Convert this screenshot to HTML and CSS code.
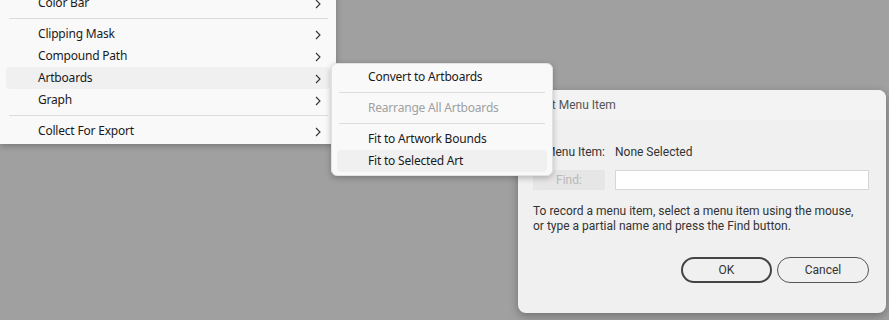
FILE: index.html
```html
<!DOCTYPE html>
<html lang="en">
<head>
  <meta charset="UTF-8">
  <title>Insert Menu Item</title>
  <link rel="stylesheet" href="styles.css">
</head>
<body>

<div class="dialog">
  <div class="dialog-title">Insert Menu Item</div>
  <div class="dialog-body">
    <div class="row">
      <span class="row-label">Menu Item:</span>
      <span class="row-value">None Selected</span>
    </div>
    <div class="row">
      <button class="find-btn" disabled>Find:</button>
      <input class="find-input" type="text">
    </div>
    <p class="hint">To record a menu item, select a menu item using the mouse,<br>or type a partial name and press the Find button.</p>
    <div class="actions">
      <button class="btn btn-default">OK</button>
      <button class="btn">Cancel</button>
    </div>
  </div>
</div>

<ul class="menu main-menu">
  <li class="item">Color Bar<svg class="chev" viewBox="0 0 6 10"><polyline points="1,1 5,5 1,9"/></svg></li>
  <li class="sep"></li>
  <li class="item">Clipping Mask<svg class="chev" viewBox="0 0 6 10"><polyline points="1,1 5,5 1,9"/></svg></li>
  <li class="item">Compound Path<svg class="chev" viewBox="0 0 6 10"><polyline points="1,1 5,5 1,9"/></svg></li>
  <li class="item hover">Artboards<svg class="chev" viewBox="0 0 6 10"><polyline points="1,1 5,5 1,9"/></svg></li>
  <li class="item">Graph<svg class="chev" viewBox="0 0 6 10"><polyline points="1,1 5,5 1,9"/></svg></li>
  <li class="sep"></li>
  <li class="item">Collect For Export<svg class="chev" viewBox="0 0 6 10"><polyline points="1,1 5,5 1,9"/></svg></li>
</ul>

<ul class="menu sub-menu">
  <li class="item">Convert to Artboards</li>
  <li class="sep"></li>
  <li class="item disabled">Rearrange All Artboards</li>
  <li class="sep"></li>
  <li class="item">Fit to Artwork Bounds</li>
  <li class="item hover">Fit to Selected Art</li>
</ul>

</body>
</html>
```

FILE: styles.css
```css
body {
  margin: 0;
  width: 889px;
  height: 320px;
  background-color: #a0a0a0;
  overflow: hidden;
  position: relative;
  font-family: "Noto Sans", sans-serif;
}

/* menus */
.menu {
  list-style: none;
  margin: 0;
  position: absolute;
  background-color: #f9f9f9;
  box-shadow: 0 2px 6px rgba(0,0,0,0.25);
  font-size: 12px;
  letter-spacing: -0.2px;
  color: #1a1a1a;
}
.main-menu {
  left: 0;
  top: -12px;
  width: 336px;
  padding: 4px 0 2px;
  border-radius: 0 0 6px 0;
}
.sub-menu {
  left: 331px;
  top: 63px;
  width: 222px;
  padding: 2px 0 3px;
  border-radius: 6px;
  border: 1px solid #e2e2e2;
  box-sizing: border-box;
}
.item {
  height: 22px;
  line-height: 22px;
  margin: 0 6px;
  padding-left: 32px;
  border-radius: 4px;
  position: relative;
}
.sub-menu .item {
  margin: 0 5px;
  padding-left: 31px;
}
.item.hover {
  background-color: #f0f0f0;
}
.item.disabled {
  color: #a0a0a0;
}
.chev {
  position: absolute;
  right: 9px;
  top: 7px;
  width: 6px;
  height: 10px;
  fill: none;
  stroke: #333;
  stroke-width: 1.1;
}
.sep {
  height: 9px;
  position: relative;
}
.sep::after {
  content: "";
  position: absolute;
  left: 9px;
  right: 8px;
  top: 4px;
  border-top: 1px solid #dcdcdc;
}
.sub-menu .sep::after {
  left: 7px;
  right: 7px;
}

/* dialog */
.dialog {
  position: absolute;
  left: 518px;
  top: 90px;
  width: 368px;
  height: 223px;
  background-color: #f0f0f0;
  border-radius: 8px;
  box-shadow: 0 3px 10px rgba(0,0,0,0.3);
  overflow: hidden;
  font-family: Roboto, sans-serif;
  font-size: 12px;
  color: #333;
}
.dialog-title {
  height: 30px;
  line-height: 31px;
  padding-left: 7px;
  background-color: #f3f3f3;
  color: #555;
  font-size: 12px;
}
.dialog-body {
  padding: 22px 17px 0 15px;
}
.row {
  display: flex;
  align-items: center;
  gap: 10px;
  height: 20px;
  margin-bottom: 8px;
}
.row-label {
  width: 72px;
  text-align: right;
}
.find-btn {
  width: 72px;
  height: 20px;
  border: none;
  background-color: #e6e6e6;
  color: #b8b8b8;
  font-family: inherit;
  font-size: 12px;
  padding: 0;
}
.find-input {
  flex: 1;
  height: 20px;
  box-sizing: border-box;
  border: 1px solid #d6d6d6;
  background-color: #fff;
  padding: 0 4px;
}
.hint {
  margin: 14px 0 0;
  line-height: 15px;
}
.actions {
  display: flex;
  justify-content: flex-end;
  gap: 5px;
  margin-top: 23px;
}
.btn {
  width: 92px;
  height: 26px;
  border: 1px solid #555;
  border-radius: 13px;
  background-color: #f0f0f0;
  font-family: inherit;
  font-size: 12px;
  color: #333;
  padding: 0;
}
.btn-default {
  width: 91px;
  border: 2px solid #444;
}
```
